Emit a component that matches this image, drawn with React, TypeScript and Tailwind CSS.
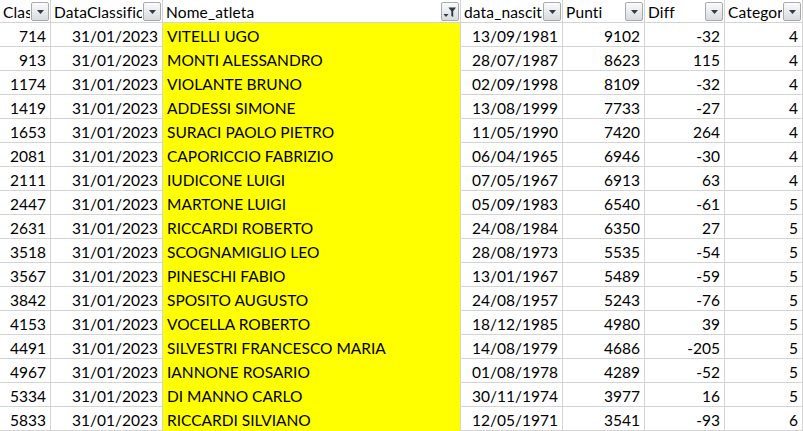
import React from "react";

type Row = [string, string, string, string, string, string, string];

const rows: Row[] = [
  ["714", "31/01/2023", "VITELLI UGO", "13/09/1981", "9102", "-32", "4"],
  ["913", "31/01/2023", "MONTI ALESSANDRO", "28/07/1987", "8623", "115", "4"],
  ["1174", "31/01/2023", "VIOLANTE BRUNO", "02/09/1998", "8109", "-32", "4"],
  ["1419", "31/01/2023", "ADDESSI SIMONE", "13/08/1999", "7733", "-27", "4"],
  ["1653", "31/01/2023", "SURACI PAOLO PIETRO", "11/05/1990", "7420", "264", "4"],
  ["2081", "31/01/2023", "CAPORICCIO FABRIZIO", "06/04/1965", "6946", "-30", "4"],
  ["2111", "31/01/2023", "IUDICONE LUIGI", "07/05/1967", "6913", "63", "4"],
  ["2447", "31/01/2023", "MARTONE LUIGI", "05/09/1983", "6540", "-61", "5"],
  ["2631", "31/01/2023", "RICCARDI ROBERTO", "24/08/1984", "6350", "27", "5"],
  ["3518", "31/01/2023", "SCOGNAMIGLIO LEO", "28/08/1973", "5535", "-54", "5"],
  ["3567", "31/01/2023", "PINESCHI FABIO", "13/01/1967", "5489", "-59", "5"],
  ["3842", "31/01/2023", "SPOSITO AUGUSTO", "24/08/1957", "5243", "-76", "5"],
  ["4153", "31/01/2023", "VOCELLA ROBERTO", "18/12/1985", "4980", "39", "5"],
  ["4491", "31/01/2023", "SILVESTRI FRANCESCO MARIA", "14/08/1979", "4686", "-205", "5"],
  ["4967", "31/01/2023", "IANNONE ROSARIO", "01/08/1978", "4289", "-52", "5"],
  ["5334", "31/01/2023", "DI MANNO CARLO", "30/11/1974", "3977", "16", "5"],
  ["5833", "31/01/2023", "RICCARDI SILVIANO", "12/05/1971", "3541", "-93", "6"],
];

const widths = ["w-[51px]", "w-[112px]", "w-[298px]", "w-[102px]", "w-[82px]", "w-[80px]", "w-[78px]"];
const headers = ["Classifica", "DataClassifica", "Nome_atleta", "data_nascita", "Punti", "Diff", "Categoria"];

function FilterButton({ active }: { active?: boolean }) {
  return (
    <div className="absolute right-[1px] top-[2px] h-[19px] w-[18px] rounded-[2px] border border-[#a7abb0] bg-gradient-to-b from-[#fbfbfb] to-[#d9dbde] flex items-center justify-center">
      {active ? (
        <svg width="14" height="14" viewBox="0 0 14 14">
          <polygon points="0.5,9 5.5,9 3,12" fill="#2f3a4a" />
          <path d="M5.5 2.5 H13 L10.2 6.3 V12 L8.3 11 V6.3 Z" fill="#2f3a4a" />
        </svg>
      ) : (
        <svg width="9" height="6" viewBox="0 0 9 6">
          <polygon points="1,1 8,1 4.5,5" fill="#2f3a4a" />
        </svg>
      )}
    </div>
  );
}

export default function App() {
  return (
    <div
      className="w-[803px] h-[431px] overflow-hidden bg-white text-black text-[15.5px] leading-[20px]"
      style={{ fontFamily: "Lato, 'Liberation Sans', sans-serif" }}
    >
      <div className="flex h-[23px]">
        {headers.map((h, i) => (
          <div
            key={i}
            className={`${widths[i]} shrink-0 relative h-[23px] border-r border-b border-[#d4d4d4] flex items-end pl-[3px] whitespace-nowrap`}
          >
            <div className="overflow-hidden mr-[20px] min-w-0 flex-1">
              <span className="tracking-[0.15px]">{h}</span>
            </div>
            <FilterButton active={i === 2} />
          </div>
        ))}
      </div>
      {rows.map((r, ri) => (
        <div key={ri} className="flex h-[24px]">
          {r.map((c, ci) => {
            const yellow = ci === 2;
            return (
              <div
                key={ci}
                className={`${widths[ci]} shrink-0 h-[24px] border-r border-b flex items-end overflow-hidden whitespace-nowrap ${
                  yellow
                    ? "bg-[#ffff00] border-r-[#d4d4d4] border-b-[#ffff00] pl-[4px] justify-start"
                    : "border-[#d4d4d4] justify-end pr-[4px]"
                }`}
              >
                <span>{c}</span>
              </div>
            );
          })}
        </div>
      ))}
    </div>
  );
}
